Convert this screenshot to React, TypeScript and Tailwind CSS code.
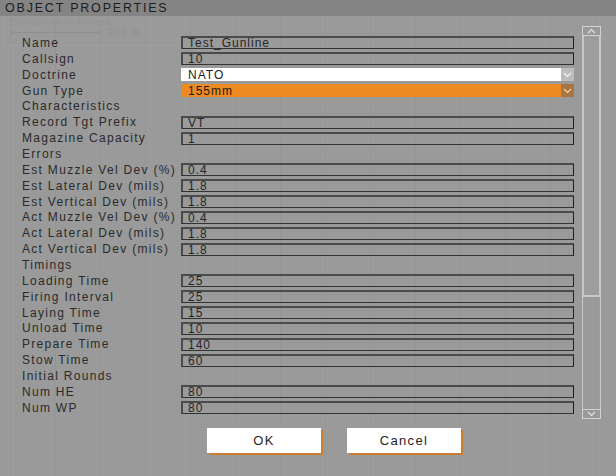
import React from "react";

type Row =
  | { kind: "field"; label: string; value: string }
  | { kind: "head"; label: string }
  | { kind: "select"; label: string; value: string; tone: "white" | "orange" };

const rows: Row[] = [
  { kind: "field", label: "Name", value: "Test_Gunline" },
  { kind: "field", label: "Callsign", value: "10" },
  { kind: "select", label: "Doctrine", value: "NATO", tone: "white" },
  { kind: "select", label: "Gun Type", value: "155mm", tone: "orange" },
  { kind: "head", label: "Characteristics" },
  { kind: "field", label: "Record Tgt Prefix", value: "VT" },
  { kind: "field", label: "Magazine Capacity", value: "1" },
  { kind: "head", label: "Errors" },
  { kind: "field", label: "Est Muzzle Vel Dev (%)", value: "0.4" },
  { kind: "field", label: "Est Lateral Dev (mils)", value: "1.8" },
  { kind: "field", label: "Est Vertical Dev (mils)", value: "1.8" },
  { kind: "field", label: "Act Muzzle Vel Dev (%)", value: "0.4" },
  { kind: "field", label: "Act Lateral Dev (mils)", value: "1.8" },
  { kind: "field", label: "Act Vertical Dev (mils)", value: "1.8" },
  { kind: "head", label: "Timings" },
  { kind: "field", label: "Loading Time", value: "25" },
  { kind: "field", label: "Firing Interval", value: "25" },
  { kind: "field", label: "Laying Time", value: "15" },
  { kind: "field", label: "Unload Time", value: "10" },
  { kind: "field", label: "Prepare Time", value: "140" },
  { kind: "field", label: "Stow Time", value: "60" },
  { kind: "head", label: "Initial Rounds" },
  { kind: "field", label: "Num HE", value: "80" },
  { kind: "field", label: "Num WP", value: "80" },
];

function Chevron({ up = false, color }: { up?: boolean; color: string }) {
  return (
    <svg width="9" height="6" viewBox="0 0 9 6" fill="none">
      <path
        d={up ? "M1 5 L4.5 1.5 L8 5" : "M1 1 L4.5 4.5 L8 1"}
        stroke={color}
        strokeWidth="1.2"
      />
    </svg>
  );
}

export default function App() {
  return (
    <div className="relative w-[616px] h-[476px] overflow-hidden bg-[#9a9a9a] bg-[linear-gradient(90deg,rgba(0,0,0,0.035)_1px,transparent_1px)] bg-[length:45px_100%] bg-[position:10px_0] font-['Liberation_Sans',Arial,sans-serif] text-[#222]">
      {/* faint map behind the dialog */}
      <div className="absolute left-[10px] top-[17px] text-[9px] leading-[10px] tracking-[1px] text-[#929292]">
        Elevations in Meters
      </div>
      <div className="absolute left-[11px] top-[29px] w-[90px] h-[7px] border-x border-[#8f8f8f]">
        <div className="mt-[3px] h-px bg-[#8f8f8f]" />
      </div>
      <div className="absolute left-[108px] top-[28px] text-[10px] leading-[10px] tracking-[1px] text-[#919191]">
        200 m
      </div>
      <div className="absolute left-[3px] top-[16px] w-[180px] h-[30px] border-l border-b border-[#a0a0a0]" />

      <div className="relative h-[16px] bg-[#848484] pl-[5px] flex items-center text-[12.5px] leading-none tracking-[1.8px] text-[#1c1c1c]">
        OBJECT PROPERTIES
      </div>

      <div className="relative flex pt-[10px]">
        <div className="pl-[22px] pt-[9px]">
          {rows.map((r, i) => (
            <div key={i} className="flex items-center h-[15.87px]">
              <div className="w-[159px] text-[12px] leading-none tracking-[1.3px] text-[#2a2a2a] whitespace-nowrap">
                {r.label}
              </div>
              {r.kind === "field" && (
                <div className="w-[393px] h-[13px] border-t-2 border-l-2 border-r border-b border-t-[#4a4a4a] border-l-[#4a4a4a] border-r-[#1e1e1e] border-b-[#333] flex items-center pl-[5px] text-[12px] leading-none tracking-[1px] text-[#262626]">
                  {r.value}
                </div>
              )}
              {r.kind === "select" && (
                <div
                  className={
                    r.tone === "white"
                      ? "w-[393px] h-[13.5px] bg-white flex items-center"
                      : "w-[393px] h-[13.5px] bg-[#ee8a22] flex items-center"
                  }
                >
                  <div className="flex-1 pl-[7px] text-[12px] leading-none tracking-[1px] text-[#1e1e1e]">
                    {r.value}
                  </div>
                  <div
                    className={
                      r.tone === "white"
                        ? "w-[13px] h-full bg-[#bdbdbd] flex items-center justify-center"
                        : "w-[13px] h-full bg-[#a87442] flex items-center justify-center"
                    }
                  >
                    <Chevron color={r.tone === "white" ? "#f4f4f4" : "#f3d6b0"} />
                  </div>
                </div>
              )}
            </div>
          ))}
        </div>

        {/* scrollbar */}
        <div className="ml-[8px] w-[19px] h-[393px] flex flex-col">
          <div className="h-[10px] border border-[#d2d2d2] flex items-center justify-center">
            <Chevron up color="#e2e2e2" />
          </div>
          <div className="h-[261px] border-2 border-t-0 border-[#c8c8c8] bg-[#9d9d9d]" />
          <div className="flex-1 border-x border-[#c8c8c8]" />
          <div className="h-[10px] border border-[#d2d2d2] flex items-center justify-center">
            <Chevron color="#e2e2e2" />
          </div>
        </div>
      </div>

      <div className="relative flex gap-[26px] pl-[207px] mt-[9px]">
        <button className="w-[114px] h-[25px] bg-white shadow-[2px_2px_0_#c8802e] text-[13px] tracking-[1.3px] text-[#1e1e1e] flex items-center justify-center">
          OK
        </button>
        <button className="w-[114px] h-[25px] bg-white shadow-[2px_2px_0_#c8802e] text-[13px] tracking-[1.3px] text-[#1e1e1e] flex items-center justify-center">
          Cancel
        </button>
      </div>
    </div>
  );
}
